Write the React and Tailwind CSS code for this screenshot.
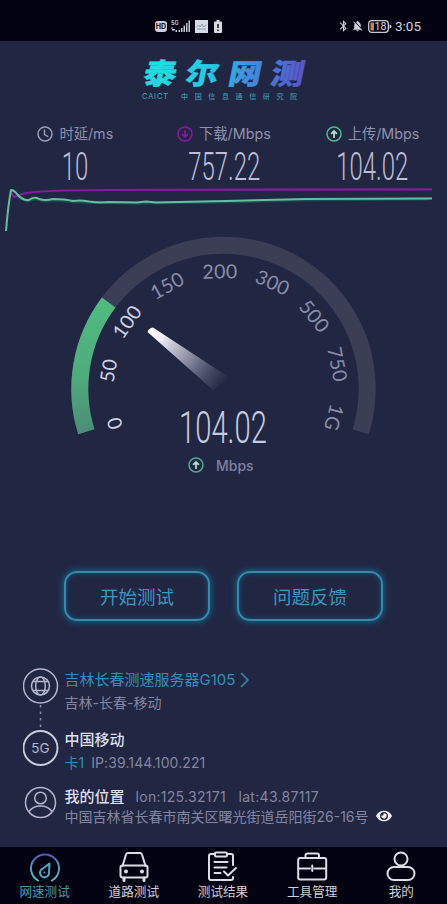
import { FaEye } from "react-icons/fa";
import { MdBluetooth, MdNotificationsOff } from "react-icons/md";

const metrics = [
  { icon: "clock", label: "时延/ms", value: "10", color: "#9a9bb4" },
  { icon: "down", label: "下载/Mbps", value: "757.22", color: "#8d1aa5" },
  { icon: "up", label: "上传/Mbps", value: "104.02", color: "#4fb88e" },
];

const ticks = [
  { text: "0", x: 115, y: 187, rotate: -107, active: true },
  { text: "50", x: 109, y: 134.5, rotate: -81, active: true },
  { text: "100", x: 127.5, y: 86, rotate: -55, active: true },
  { text: "150", x: 167.5, y: 50, rotate: -29 },
  { text: "200", x: 220, y: 36, rotate: -1 },
  { text: "300", x: 272.5, y: 47, rotate: 25 },
  { text: "500", x: 314, y: 80.5, rotate: 51 },
  { text: "750", x: 337, y: 128.5, rotate: 79 },
  { text: "1G", x: 333.5, y: 181.5, rotate: 105 },
];

const RoundIcon = ({ type, color }) => (
  <svg width="16" height="16" viewBox="0 0 16 16" fill="none" stroke={color} strokeWidth="1.5" strokeLinecap="round">
    <circle cx="8" cy="8" r="7" />
    {type === "clock" && <path d="M7.5 4v4.6l3.2 1.7" />}
    {type === "down" && <path d="M8 4.8v6M5.6 8.6L8 11l2.4-2.4" />}
    {type === "up" && <path stroke="#a5e3cb" strokeWidth="1.8" d="M8 11.2v-6M5.6 7.4L8 5l2.4 2.4" />}
  </svg>
);

const StatusBar = () => (
  <div className="h-[41px] bg-[#030211] flex items-start justify-between pl-[155px] pr-[26px] pt-[17px] text-[#d0d0d8]">
    <div className="flex items-center gap-[4px] h-[18px]">
      <span className="w-[12px] h-[11px] rounded-[3px] bg-[#d0d0d8] text-[#111] text-[7px] leading-[11px] font-bold text-center">HD</span>
      <svg className="overflow-visible" width="20" height="14" viewBox="0 0 20 14" fill="#c6c6d0">
        <text x="0" y="5.500" fontSize="5.500" fontWeight="700">5G</text>
        <path d="M0 8.500h2v1H0zM1 10h3v1.500H1zM4.500 11h1.500v2H4.500zM7.500 11h1.500v2H7.500zM10 9h1.500v4H10zM12.500 6.500h1.500v6.500h-1.500zM15 4h1.500v9H15zM17.500 1.500h1.500v11.500h-1.500z" />
      </svg>
      <svg width="13" height="13" viewBox="0 0 13 13">
        <path fill="#d6dce4" d="M0 0h13v13H0z" />
        <path fill="none" stroke="#8e9aab" d="M1.500 7l2-2 1.500 2 2-3 1.500 3 3-2M2 9h9" />
      </svg>
      <svg className="ml-[2px]" width="8" height="13" viewBox="0 0 8 13">
        <path fill="#d8d8df" d="M2.500 0h3v1.500H7q1 0 1 1V12q0 1-1 1H1q-1 0-1-1V2.500q0-1 1-1h1.500z" />
        <path stroke="#151522" strokeWidth="1.500" d="M4 4v4M4 9.500V11" />
      </svg>
    </div>
    <div className="flex items-center h-[18px]">
      <MdBluetooth className="w-[13px] h-[14px]" />
      <MdNotificationsOff className="w-[13px] h-[14px] ml-[1px]" />
      <svg className="ml-[4px]" width="24" height="13" viewBox="0 0 24 13">
        <rect x="0.700" y="0.700" width="19.600" height="11.600" rx="3" fill="none" stroke="#c9c9cf" strokeWidth="1.300" />
        <path fill="#b98a50" d="M2.500 2.500h3.500v8H2.500z" />
        <path fill="#c9c9cf" d="M21.500 4.500q2 0 2 2t-2 2z" />
        <text x="6.500" y="10.200" fontSize="10.500" fontFamily="Roboto" fill="#d8d8de">18</text>
      </svg>
      <span className="ml-[3px] text-[13.500px] leading-[18px] font-[Roboto]">3:05</span>
    </div>
  </div>
);

const Logo = () => (
  <div className="pt-[16px] h-[77px] pl-[142px]">
    <svg className="overflow-visible" width="170" height="48" viewBox="0 0 170 48">
      <defs>
        <linearGradient id="logo" gradientUnits="userSpaceOnUse" x1="0" y1="0" x2="152" y2="0">
          <stop offset="0" stopColor="#21e0df" />
          <stop offset="0.420" stopColor="#25cbe3" />
          <stop offset="0.660" stopColor="#3f8fe0" />
          <stop offset="1" stopColor="#5a55c8" />
        </linearGradient>
      </defs>
      <text x="5 43.500 83 122" y="28" fontSize="30" fontWeight="900" fill="url(#logo)" stroke="url(#logo)" strokeWidth="0.500" transform="scale(1.09 0.95) skewX(-10)">
        泰尔网测
      </text>
      <text x="0" y="42" fontSize="7.500" textLength="26" fill="#48a5b8">CAICT</text>
      <text x="39" y="42" fontSize="7" textLength="116" fontWeight="500" fill="#3d93a6">中国信息通信研究院</text>
    </svg>
  </div>
);

const Metrics = () => (
  <div className="flex h-[66px] pl-px">
    {metrics.map((m) => (
      <div key={m.label} className="w-[148.600px] shrink-0 flex flex-col items-center">
        <div className="flex items-center gap-[6px] h-[30px] mt-px text-[14.300px] text-[#9091aa]">
          <RoundIcon type={m.icon} color={m.color} />
          <span>{m.label}</span>
        </div>
        <div className="h-[36px] leading-[39px] text-[38px] font-light text-[#bdbed4] font-[Roboto] scale-x-[0.630] whitespace-nowrap">
          {m.value}
        </div>
      </div>
    ))}
  </div>
);

const SpeedChart = () => (
  <svg className="block" width="447" height="52" viewBox="0 184 447 52" fill="none" strokeLinejoin="round">
    <path stroke="#851b9d" strokeWidth="2.200" d="M10 191l4 6 3-1q5-3 18-4 25-2 75-2l322-.7" />
    <path stroke="#174c50" strokeWidth="3" d="M18 197l9 4 7-2q6 0 11 2l10-1q12 1 20 2l60 1 90-1 75-2 128-1" />
    <path stroke="#66bd9f" strokeWidth="2" d="M6 231Q8 206 11 190q3 0 6 4 6 7 12 6 5-4 10-1 6 2 14 0 12 0 20 2 8-1 16 .5 10 1.500 20 .5l28 .5 9-1 10 1 70-1.500 80-2 126-.5" />
  </svg>
);

const Gauge = () => (
  <svg className="block overflow-visible" width="447" height="214" viewBox="0 0 447 214">
    <defs>
      <linearGradient id="speed" x1="0" y1="0" x2="0" y2="1">
        <stop offset="0" stopColor="#50ba80" />
        <stop offset="0.550" stopColor="#4fac7c" />
        <stop offset="1" stopColor="#4b8e78" />
      </linearGradient>
      <linearGradient id="needle" gradientUnits="userSpaceOnUse" x1="150" y1="94" x2="227" y2="147">
        <stop offset="0" stopColor="#fff" />
        <stop offset="0.150" stopColor="#f0f0f5" />
        <stop offset="0.550" stopColor="#9293aa" stopOpacity="0.850" />
        <stop offset="1" stopColor="#65677f" stopOpacity="0" />
      </linearGradient>
    </defs>
    <path d="M86.300 195.700A143.700 143.700 0 1 1 360.700 195.700" fill="none" stroke="#3c3e55" strokeWidth="17" />
    <path d="M86.300 195.700A143.700 143.700 0 0 1 108.700 66.500" fill="none" stroke="url(#speed)" strokeWidth="17" />
    <path d="M147.500 96q1-4 5.500-4.500L230 142l-17 12z" fill="url(#needle)" />
    {ticks.map((t) => (
      <text
        key={t.text}
        transform={`translate(${t.x} ${t.y}) rotate(${t.rotate})`}
        y="6.500"
        textAnchor="middle"
        letterSpacing="0.400"
        fontFamily="Lato"
        fontSize="19.500"
        fill={t.active ? "#d1d1e1" : "#8b8da9"}
      >
        {t.text}
      </text>
    ))}
    <text x="179" y="207" fontSize="45" fontFamily="Roboto" fontWeight="300" textLength="88" lengthAdjust="spacingAndGlyphs" fill="#c9cadd">
      104.02
    </text>
  </svg>
);

const GlowButton = ({ children }) => (
  <button className="w-[146px] h-[50px] pt-[3px] rounded-[13px] border-2 border-[#368bad] text-[18.500px] text-[#3d96be] shadow-[0_0_6px_1px_#176388,inset_0_0_5px_#175b7e]">
    {children}
  </button>
);

const Details = () => (
  <div className="flex pl-[23px] h-[165px]">
    <div className="w-[36px] flex flex-col items-center">
      <svg width="36" height="162" viewBox="23 668 36 162" fill="none" stroke="#b4b5c9" strokeWidth="1.500">
        <circle cx="40.500" cy="686" r="17" />
        <circle cx="40.500" cy="686" r="9" />
        <ellipse cx="40.500" cy="686" rx="4.800" ry="9" />
        <path d="M33 681.500h15M33 690.500h15" />
        <path d="M40.500 705v22" strokeDasharray="2.500 4" stroke="#8b8ca4" />
        <circle cx="40.500" cy="748" r="17" strokeWidth="1.900" stroke="#cacbdc" />
        <text x="40.500" y="753" fontSize="13.500" textAnchor="middle" fontFamily="Inter" fill="#b7b8cb" stroke="none">5G</text>
        <circle cx="40.500" cy="802.500" r="15" />
        <circle cx="40.500" cy="798" r="5.800" />
        <path d="M29 811.500q4-5.500 11.500-5.500T52 811.500" />
      </svg>
    </div>
    <div className="pl-[5.500px] text-[14px] text-[#8485a0] whitespace-nowrap">
      <div className="flex items-center h-[24px] text-[15px] text-[#318fb9]">
        吉林长春测速服务器G105
        <svg className="ml-[5px]" width="10" height="16" viewBox="0 0 10 16" fill="none" stroke="#378daf" strokeWidth="1.500">
          <path d="M1 1l7 7-7 7" />
        </svg>
      </div>
      <div className="h-[22px] leading-[22px]">吉林-长春-移动</div>
      <div className="mt-[14px] h-[24px] leading-[24px] text-[15px] font-medium text-[#dedfeb]">中国移动</div>
      <div className="h-[22px] leading-[22px]">
        <span className="text-[#318fb9] mr-[7px]">卡1</span>
        <span className="tracking-[0.100px]">IP:39.144.100.221</span>
      </div>
      <div className="mt-[14px] h-[18px] leading-[18px] flex">
        <span className="text-[15px] font-medium text-[#dedfeb] w-[71px]">我的位置</span>
        <span className="w-[103px] tracking-[0.300px]">lon:125.32171</span>
        <span className="tracking-[0.300px]">lat:43.87117</span>
      </div>
      <div className="h-[20px] flex items-center">
        中国吉林省长春市南关区曙光街道岳阳街26-16号
        <FaEye className="w-[16px] h-[14px] ml-[7px] text-[#f1f1f6]" />
      </div>
    </div>
  </div>
);

const NavItem = ({ label, active, children }) => (
  <div className={`w-[89.200px] shrink-0 flex flex-col items-center text-[12.600px] ${active ? "text-[#4a9cae]" : "text-[#d0d0da]"}`}>
    <svg width="32" height="32" viewBox="0 0 32 32" fill="none" stroke="#dddde6" strokeWidth="2" strokeLinejoin="round" strokeLinecap="round">
      {children}
    </svg>
    <span className="h-[18px] leading-[18px] whitespace-nowrap">{label}</span>
  </div>
);

const BottomNav = () => (
  <div className="h-[57px] bg-[#030211] flex pt-[4px]">
    <NavItem label="网速测试" active>
      <defs>
        <linearGradient id="nav" x1="0" y1="0" x2="0" y2="1">
          <stop offset="0" stopColor="#5a50c0" />
          <stop offset="0.350" stopColor="#4d8db8" />
          <stop offset="1" stopColor="#58c8c9" />
        </linearGradient>
      </defs>
      <path stroke="url(#nav)" d="M9 29.500A14 14 0 1 1 23 29.500" />
      <path stroke="#4fa9b9" d="M20.500 12.500l-6.500 5a4.500 4.500 0 1 0 6 4z" />
      <circle cx="15.500" cy="21.500" r="1" fill="#4fa9b9" stroke="none" />
    </NavItem>
    <NavItem label="道路测试">
      <path d="M4.500 15L8 3.500q.4-1.500 2-1.500h12q1.600 0 2 1.500L27.500 15" />
      <rect x="2.500" y="14.500" width="27" height="12" rx="2" />
      <path d="M6 27v2.500M26 27v2.500" strokeWidth="3" />
      <circle cx="8" cy="20.500" r="1" fill="#dddde6" />
      <circle cx="24" cy="20.500" r="1" fill="#dddde6" />
    </NavItem>
    <NavItem label="测试结果">
      <path d="M8 3H4Q2 3 2 5v22q0 2 2 2h20q2 0 2-2v-1M26 14V5q0-2-2-2h-4" />
      <rect x="8" y="1.500" width="12" height="4" rx="1" />
      <path d="M7.500 11h13M7.500 16.500h12M7.500 22h6M17 20.500l4 4 8-7.500" />
    </NavItem>
    <NavItem label="工具管理">
      <rect x="2.200" y="7" width="28" height="21.500" rx="2" />
      <path d="M9.500 7V4.500q0-2 2-2H21q2 0 2 2V7M2.500 17.500H14M18.500 17.500H30M16.300 14.500v5.500" />
    </NavItem>
    <NavItem label="我的">
      <circle cx="16" cy="8" r="6.500" />
      <rect x="2.500" y="16" width="27" height="13" rx="6.500" />
    </NavItem>
  </div>
);

const App = () => {
  return (
    <div className="w-[447px] h-[904px] overflow-hidden flex flex-col bg-[#212743] font-[Inter,'Noto_Sans_CJK_SC',sans-serif]">
      <StatusBar />
      <Logo />
      <Metrics />
      <SpeedChart />
      <Gauge />
      <div className="h-[30px] flex items-center gap-[12px] pl-[188px] text-[#8081a0]">
        <RoundIcon type="up" color="#4fa98b" />
        <span className="text-[14px] font-medium">Mbps</span>
      </div>
      {/* Action buttons */}
      <div className="mt-[91px] pl-[64px] flex gap-[27px]">
        <GlowButton>开始测试</GlowButton>
        <GlowButton>问题反馈</GlowButton>
      </div>
      <div className="mt-[47px]">
        <Details />
      </div>
      <div className="mt-auto">
        <BottomNav />
      </div>
    </div>
  );
};

export default App;
